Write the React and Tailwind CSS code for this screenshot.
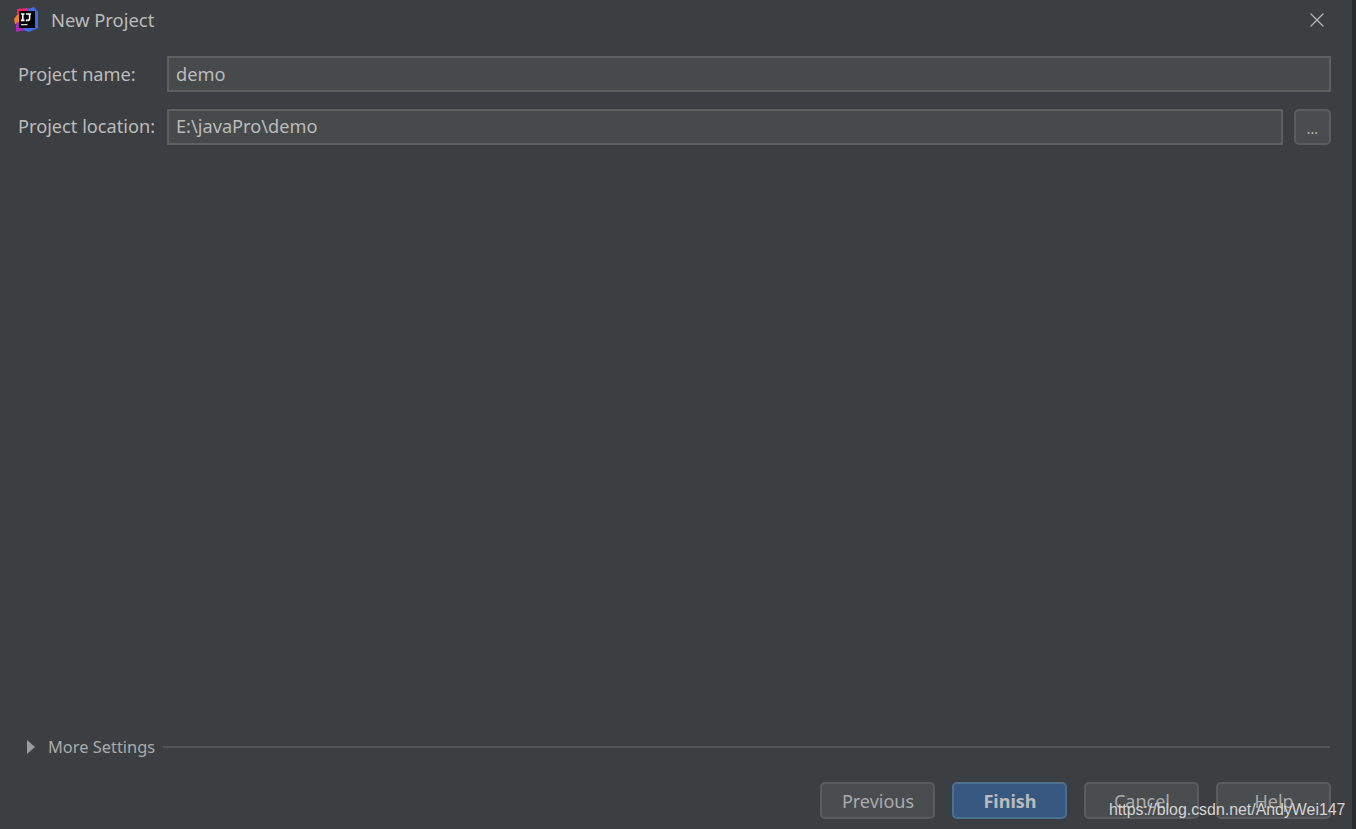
import { X } from 'lucide-react';

const font = "font-['Noto_Sans','Open_Sans',sans-serif]";

function IdeaLogo() {
  return (
    <svg width="24" height="25" viewBox="0 0 24 25" className="shrink-0">
      <polygon points="3,2 14,1 16,8 6,22 3,20" fill="#f0246f" />
      <polygon points="14,2 20,0 24,5 24,21 15,25 9,23 15,10" fill="#3f6be8" />
      <polygon points="3,8 0,12 1,17 5,17 5,8" fill="#f57c20" />
      <polygon points="2,16 2,25 11,23 5,15" fill="#a52bb0" />
      <rect x="5" y="4" width="16" height="17" fill="#000" />
      <path d="M7 7h3.6M8.8 7v6.4M7 13.4h3.6" stroke="#fff" strokeWidth="1.6" fill="none" />
      <path d="M12 7h5M15.6 7v4.6q0 1.8-1.8 1.8h-1.8" stroke="#fff" strokeWidth="1.6" fill="none" />
      <rect x="7" y="17" width="6.5" height="1.3" fill="#d8d8d8" />
    </svg>
  );
}

function Field({ label, value, lowered, children }) {
  return (
    <div className="flex items-center h-[36px]">
      <span className={`w-[149px] shrink-0 text-[18.2px] text-[#bbbbbb] whitespace-nowrap ${lowered ? 'pt-[2px]' : ''}`}>{label}</span>
      <div className={`flex-1 h-[36px] flex items-center bg-[#464a4b] border-2 border-[#5d6060] pl-[7px] text-[18.2px] text-[#bbbbbb] ${lowered ? 'pt-[2px]' : ''}`}>
        {value}
      </div>
      {children}
    </div>
  );
}

function Btn({ children, primary }) {
  return (
    <button
      className={`w-[115px] h-[37px] pt-[2px] pl-[1px] rounded-[5px] border-2 text-[18px] text-center ${
        primary
          ? 'bg-[#365880] border-[#4c708c] text-[#bbbbbb] font-bold'
          : 'bg-[#4a4d4f] border-[#5a5d5e] text-[#a9abab]'
      }`}
    >
      {children}
    </button>
  );
}

export default function App() {
  return (
    <div className={`relative w-[1356px] h-[829px] overflow-hidden flex bg-[#3c3f41] ${font}`}>
      <div className="flex-1 flex flex-col pl-[18px] pr-[21px]">
        {/* title bar */}
        <div className="flex items-center h-[38px] pt-[1px] -ml-[4px]">
          <IdeaLogo />
          <span className="ml-[13px] text-[18.4px] text-[#bbbbbb]">New Project</span>
          <X className="ml-auto mr-[2px] w-[24px] h-[24px] text-[#b4b6b6]" strokeWidth={1.3} />
        </div>

        {/* form */}
        <div className="flex flex-col gap-[17px] mt-[18px]">
          <Field label="Project name:" value="demo" lowered />
          <Field label="Project location:" value="E:\javaPro\demo">
            <button className="ml-[11px] w-[37px] h-[36px] rounded-[5px] border-2 border-[#5a5d5e] bg-[#4a4d4f] text-[14px] leading-[36px] text-[#bbbbbb]">
              ...
            </button>
          </Field>
        </div>

        {/* more settings */}
        <div className="mt-auto flex items-center h-[24px] pl-[9px] mr-[1px]">
          <svg width="8" height="14" viewBox="0 0 8 14" className="shrink-0">
            <polygon points="0,0 8,7 0,14" fill="#9a9c9d" />
          </svg>
          <span className="ml-[13px] text-[16.4px] text-[#a9abab] whitespace-nowrap">More Settings</span>
          <div className="flex-1 ml-[8px] h-[2px] bg-[#525556]" />
        </div>

        {/* footer buttons */}
        <div className="flex justify-end gap-[17px] mt-[23px] mb-[10px]">
          <Btn>Previous</Btn>
          <Btn primary>Finish</Btn>
          <Btn>Cancel</Btn>
          <Btn>Help</Btn>
        </div>
      </div>

      {/* right edge of the window */}
      <div className="w-[4px] bg-[#2b2b2b]" />

      {/* watermark */}
      <span className="absolute left-[1109px] top-[799px] text-[15.9px] leading-[22px] text-[#d4d4d4] font-['Liberation_Sans',sans-serif] whitespace-nowrap">
        https://blog.csdn.net/AndyWei147
      </span>
    </div>
  );
}
